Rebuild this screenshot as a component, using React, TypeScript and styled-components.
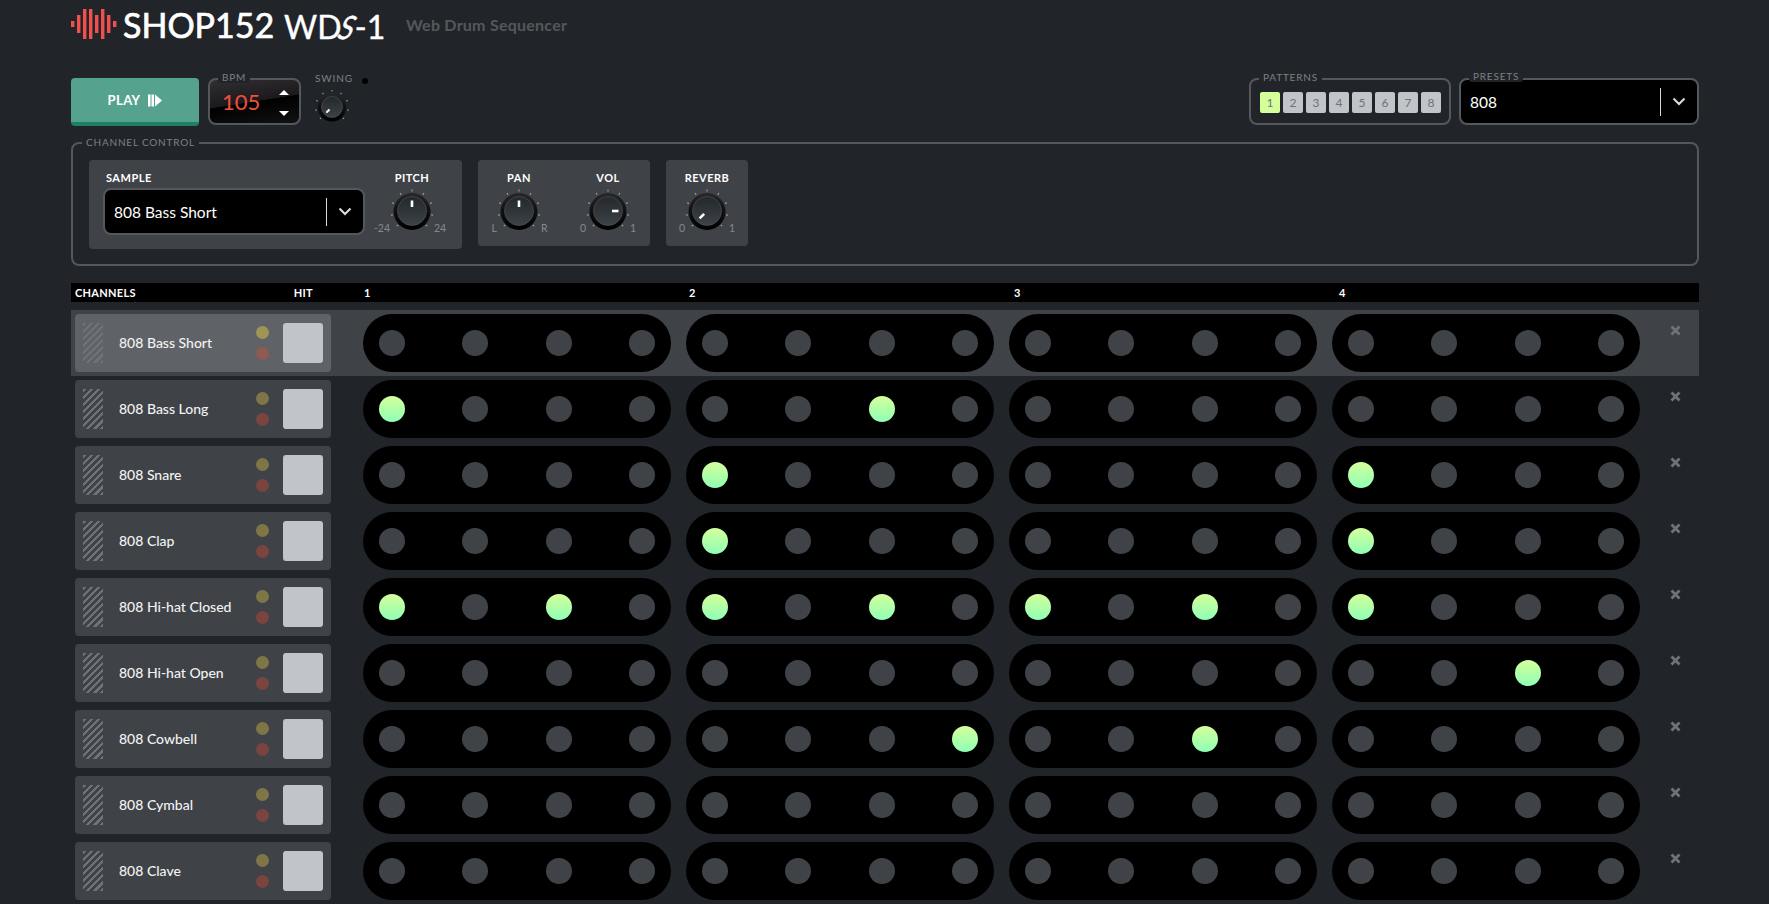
import React from 'react';
import styled, { createGlobalStyle } from 'styled-components';

const font = `'Lato', 'Noto Sans', sans-serif`;

const Global = createGlobalStyle`
  html, body { margin: 0; padding: 0; background: #212529; height: 904px; overflow: hidden; }
  body { font-family: ${font}; color: #fff; }
  * { box-sizing: border-box; }
`;

const Page = styled.div`
  width: 1769px;
  height: 904px;
  overflow: hidden;
  padding: 0 70px 0 71px;
  background: #212529;
`;

const Header = styled.header`
  height: 50px;
  padding-top: 7px;
  display: flex;
  align-items: flex-start;
`;
const LogoWord = styled.span`
  margin-left: 6px;
  font-size: 34px;
  line-height: 36px;
  font-weight: 400;
  -webkit-text-stroke: 0.7px #fff;
  color: #fff;
  width: 161px;
`;
const ModelWord = styled.span`
  font-size: 32px;
  line-height: 36px;
  width: 122px;
  color: #fff;
  padding-top: 2px;
  -webkit-text-stroke: 0.4px #fff;
`;
const SlantS = styled.span`
  display: inline-block;
  margin: 0 -2px;
  transform: skewX(-22deg) scaleX(0.85);
`;
const Tagline = styled.span`
  font-size: 16px;
  font-weight: 700;
  line-height: 36px;
  letter-spacing: 0.25px;
  color: #54585d;
`;

const TopBar = styled.div`
  margin-top: 28px;
  height: 47px;
  display: flex;
  align-items: flex-start;
`;
const PlayButton = styled.button`
  width: 128px;
  height: 48px;
  margin-right: 9px;
  border: 0;
  border-bottom: 4px solid #1d8069;
  border-radius: 4px;
  background: #55a38f;
  color: #fff;
  font-family: ${font};
  font-size: 13px;
  font-weight: 700;
  letter-spacing: 0.4px;
  display: flex;
  align-items: center;
  justify-content: center;
  gap: 8px;
  padding: 0;
`;
const Legend = styled.span<{ $left: number; $top?: number }>`
  position: absolute;
  left: ${p => p.$left}px;
  top: ${p => p.$top ?? -9}px;
  padding: 0 4px;
  background: #212529;
  font-size: 10px;
  line-height: 12px;
  letter-spacing: 0.8px;
  color: #7d8186;
  border-radius: 3px;
`;
const BpmBox = styled.div`
  position: relative;
  width: 93px;
  height: 47px;
  border: 2px solid #54585d;
  border-radius: 8px;
  background: linear-gradient(171deg, #322f33 0%, #1b191c 49.5%, #000 50.5%, #121214 100%);
  display: flex;
  align-items: center;
  justify-content: space-between;
  padding: 0 10px 0 12px;
`;
const BpmValue = styled.span`
  font-size: 22px;
  color: #f0503a;
`;
const Arrows = styled.div`
  display: flex;
  flex-direction: column;
  gap: 16px;
  padding-top: 3px;
`;
const Arrow = styled.span<{ $up?: boolean }>`
  width: 0;
  height: 0;
  border-left: 5px solid transparent;
  border-right: 5px solid transparent;
  ${p => (p.$up ? 'border-bottom: 5px solid #fff;' : 'border-top: 5px solid #fff;')}
`;
const SwingBlock = styled.div`
  margin-left: 14px;
  display: flex;
  flex-direction: column;
  align-items: flex-start;
  width: 60px;
  margin-top: -6px;
`;
const SwingHead = styled.div`
  display: flex;
  align-items: center;
  gap: 9px;
  font-size: 10px;
  line-height: 12px;
  letter-spacing: 0.9px;
  color: #7d8186;
`;
const Led = styled.span`
  width: 6px;
  height: 6px;
  border-radius: 50%;
  background: #000;
  margin-top: 5px;
`;
const SwingKnobWrap = styled.div`
  margin: 3px 0 0 -3px;
`;
const Spacer = styled.div`
  flex: 1;
`;
const PatternBox = styled.div`
  position: relative;
  width: 202px;
  height: 47px;
  border: 2px solid #54585d;
  border-radius: 8px;
  padding: 12px 0 0 9px;
  display: flex;
  gap: 3px;
  margin-right: 8px;
`;
const PatternButton = styled.span<{ $active?: boolean }>`
  width: 20px;
  height: 21px;
  border-radius: 2px;
  background: ${p => (p.$active ? '#d5ff9b' : '#c1c4c8')};
  color: #6f7378;
  font-size: 12px;
  display: flex;
  align-items: center;
  justify-content: center;
`;
const SelectBox = styled.div<{ $w: number; $h: number }>`
  position: relative;
  width: ${p => p.$w}px;
  height: ${p => p.$h}px;
  border: 2px solid #54585d;
  border-radius: 8px;
  background: #000;
  display: flex;
  align-items: center;
  padding-left: 9px;
  font-size: 15.5px;
  color: #fff;
`;
const SelectText = styled.span`
  flex: 1;
`;
const SelectDivider = styled.span`
  width: 1px;
  height: 28px;
  background: #d8d8d8;
`;
const Chevron = styled.span`
  width: 36px;
  display: flex;
  justify-content: center;
  color: #ddd;
`;
const ControlField = styled.section`
  position: relative;
  margin-top: 17px;
  height: 124px;
  border: 2px solid #54585d;
  border-radius: 8px;
  padding: 16px 16px;
  display: flex;
  align-items: flex-start;
  gap: 16px;
`;
const Panel = styled.div<{ $w: number; $h: number }>`
  width: ${p => p.$w}px;
  height: ${p => p.$h}px;
  border-radius: 4px;
  background: #3f4348;
  display: flex;
`;
const SampleCol = styled.div`
  margin-left: 14px;
  margin-top: 11px;
  display: flex;
  flex-direction: column;
  gap: 4px;
`;
const PanelLabel = styled.span`
  font-size: 11px;
  line-height: 13px;
  font-weight: 700;
  letter-spacing: 0.5px;
  color: #fff;
  padding-left: 3px;
`;
const KnobCol = styled.div<{ $x: number }>`
  margin-left: ${p => p.$x}px;
  width: 80px;
  padding-top: 11px;
  display: flex;
  flex-direction: column;
  align-items: center;
`;
const KnobLabel = styled.span`
  font-size: 11px;
  line-height: 13px;
  font-weight: 700;
  letter-spacing: 0.5px;
  color: #fff;
`;
const KnobRow = styled.div`
  display: grid;
  grid-template-columns: 18px 44px 18px;
  align-items: end;
  margin-top: 2px;
`;
const KnobSlot = styled.div`
  margin: 0 -3px;
`;
const Range = styled.span<{ $right?: boolean }>`
  font-size: 10.5px;
  line-height: 12px;
  color: #85898e;
  white-space: nowrap;
  padding-bottom: 2px;
  text-align: ${p => (p.$right ? 'left' : 'right')};
`;

const Grid = styled.div`
  margin-top: 17px;
`;
const HeadRow = styled.div`
  height: 19px;
  background: #000;
  display: grid;
  grid-template-columns: 293px repeat(4, 325px) 1fr;
  align-items: center;
  font-size: 11px;
  font-weight: 700;
  letter-spacing: 0.3px;
  color: #fff;
  margin-bottom: 8px;
`;
const HeadFirst = styled.div`
  display: flex;
  justify-content: space-between;
  padding: 0 51px 0 4px;
`;
const Row = styled.div<{ $selected?: boolean }>`
  height: 66px;
  padding: 4px 0 4px 4px;
  background: ${p => (p.$selected ? '#3f4348' : 'transparent')};
  display: flex;
  align-items: stretch;
`;
const ChannelCard = styled.div<{ $selected?: boolean }>`
  width: 256px;
  border-radius: 4px;
  background: ${p => (p.$selected ? '#5f6368' : '#3f4348')};
  display: flex;
  align-items: center;
  padding: 0 8px;
  margin-right: 32px;
`;
const Grip = styled.span`
  width: 20px;
  height: 40px;
  background: repeating-linear-gradient(135deg, #6f7378 0 2.5px, transparent 2.5px 5px);
  margin-right: 16px;
`;
const ChannelName = styled.span`
  flex: 1;
  font-size: 14px;
  font-weight: 500;
  color: #f2f2f2;
  padding-bottom: 2px;
`;
const DotPair = styled.div`
  display: flex;
  flex-direction: column;
  gap: 8px;
  margin-right: 14px;
`;
const StatusDot = styled.span<{ $color: string }>`
  width: 13px;
  height: 13px;
  border-radius: 50%;
  background: ${p => p.$color};
`;
const HitPad = styled.span`
  width: 40px;
  height: 40px;
  border-radius: 3px;
  background: #c1c4c8;
`;
const Pill = styled.div`
  width: 308px;
  margin-right: 15px;
  border-radius: 29px;
  background: #000;
  padding: 0 16px;
  display: flex;
  align-items: center;
  justify-content: space-between;
`;
const Step = styled.span<{ $on?: boolean }>`
  width: 26px;
  height: 26px;
  border-radius: 50%;
  background: ${p => (p.$on ? 'linear-gradient(180deg, #d5ff9b 0%, #8effb5 100%)' : '#3f4348')};
`;
const RemoveCell = styled.div`
  padding: 11px 0 0 15px;
  color: #6f7378;
  display: flex;
  align-items: flex-start;
`;

const Knob: React.FC<{ angle: number; size?: 'sm' | 'md' }> = ({ angle, size = 'md' }) => {
  const small = size === 'sm';
  const dim = small ? 40 : 50;
  const c = dim / 2;
  const disc = small ? 14 : 18.5;
  const cap = small ? 10.5 : 14.5;
  const tickIn = small ? 15.5 : 19.5;
  const tickOut = small ? 17 : 21.5;
  const ptrA = small ? 3.5 : 4;
  const ptrB = small ? 8 : 10.5;
  const id = `knob-${size}-${angle}`;
  const ticks = Array.from({ length: 9 }, (_, i) => -135 + i * 33.75);
  return (
    <svg width={dim} height={dim} viewBox={`0 0 ${dim} ${dim}`} style={{ display: 'block' }}>
      <defs>
        <linearGradient id={id} x1="0" y1="0" x2="0" y2="1">
          <stop offset="0" stopColor="#23282c" />
          <stop offset="1" stopColor="#3c4247" />
        </linearGradient>
        <linearGradient id={`${id}-d`} x1="0" y1="0" x2="0" y2="1">
          <stop offset="0" stopColor="#2a272b" />
          <stop offset="0.45" stopColor="#121114" />
          <stop offset="1" stopColor="#000" />
        </linearGradient>
      </defs>
      {ticks.map(t => (
        <line
          key={t}
          x1={c}
          y1={c - tickIn}
          x2={c}
          y2={c - tickOut}
          stroke="#a5a8ac"
          strokeWidth="1"
          transform={`rotate(${t} ${c} ${c})`}
        />
      ))}
      <circle cx={c} cy={c + 0.5} r={disc} fill={`url(#${id}-d)`} />
      <circle cx={c} cy={c} r={cap} fill={`url(#${id})`} stroke="#5d6165" strokeWidth="0.5" />
      <line
        x1={c}
        y1={c - ptrA}
        x2={c}
        y2={c - ptrB}
        stroke="#fff"
        strokeWidth={small ? 2 : 2.6}
        transform={`rotate(${angle} ${c} ${c})`}
      />
    </svg>
  );
};

const ChevronIcon = () => (
  <svg width="14" height="9" viewBox="0 0 14 9">
    <path d="M1.5 1.5 L7 7 L12.5 1.5" fill="none" stroke="currentColor" strokeWidth="2" />
  </svg>
);

const LogoWave = () => (
  <svg width="46" height="30" viewBox="0 0 46 30" style={{ display: 'block', marginTop: 2 }}>
    {[6, 18, 30, 30, 18, 30, 18, 6].map((h, i) => (
      <rect key={i} x={i * 6} y={15 - h / 2} width="3.4" height={h} fill="#f2504f" />
    ))}
  </svg>
);

const CloseIcon = () => (
  <svg width="11" height="11" viewBox="0 0 11 11">
    <path d="M1.5 1.5 L9.5 9.5 M9.5 1.5 L1.5 9.5" stroke="currentColor" strokeWidth="2.8" />
  </svg>
);

const PlayIcon = () => (
  <svg width="14" height="13" viewBox="0 0 14 13">
    <rect x="0" y="0.5" width="2.5" height="12" fill="#fff" />
    <rect x="3.5" y="0.5" width="2.5" height="12" fill="#fff" />
    <path d="M7 0.5 L14 6.5 L7 12.5 Z" fill="#fff" />
  </svg>
);

const channels: { name: string; on: number[] }[] = [
  { name: '808 Bass Short', on: [] },
  { name: '808 Bass Long', on: [0, 6] },
  { name: '808 Snare', on: [4, 12] },
  { name: '808 Clap', on: [4, 12] },
  { name: '808 Hi-hat Closed', on: [0, 2, 4, 6, 8, 10, 12] },
  { name: '808 Hi-hat Open', on: [14] },
  { name: '808 Cowbell', on: [7, 10] },
  { name: '808 Cymbal', on: [] },
  { name: '808 Clave', on: [] },
];

const Select: React.FC<{ w: number; h: number; value: string; children?: React.ReactNode }> = ({ w, h, value, children }) => (
  <SelectBox $w={w} $h={h}>
    {children}
    <SelectText>{value}</SelectText>
    <SelectDivider />
    <Chevron>
      <ChevronIcon />
    </Chevron>
  </SelectBox>
);

const RangedKnob: React.FC<{ label: string; min: string; max: string; angle: number; x: number }> = ({ label, min, max, angle, x }) => (
  <KnobCol $x={x}>
    <KnobLabel>{label}</KnobLabel>
    <KnobRow>
      <Range>{min}</Range>
      <KnobSlot>
        <Knob angle={angle} />
      </KnobSlot>
      <Range $right>{max}</Range>
    </KnobRow>
  </KnobCol>
);

export default function App() {
  return (
    <Page>
      <Global />
      <Header>
        <LogoWave />
        <LogoWord>SHOP152</LogoWord>
        <ModelWord>
          WD<SlantS>S</SlantS>-1
        </ModelWord>
        <Tagline>Web Drum Sequencer</Tagline>
      </Header>
      <TopBar>
        <PlayButton>
          PLAY <PlayIcon />
        </PlayButton>
        <BpmBox>
          <Legend $left={8}>BPM</Legend>
          <BpmValue>105</BpmValue>
          <Arrows>
            <Arrow $up />
            <Arrow />
          </Arrows>
        </BpmBox>
        <SwingBlock>
          <SwingHead>
            SWING <Led />
          </SwingHead>
          <SwingKnobWrap>
            <Knob angle={-135} size="sm" />
          </SwingKnobWrap>
        </SwingBlock>
        <Spacer />
        <PatternBox>
          <Legend $left={8}>PATTERNS</Legend>
          {[1, 2, 3, 4, 5, 6, 7, 8].map(n => (
            <PatternButton key={n} $active={n === 1}>
              {n}
            </PatternButton>
          ))}
        </PatternBox>
        <Select w={240} h={47} value="808">
          <Legend $left={8} $top={-10}>PRESETS</Legend>
        </Select>
      </TopBar>
      <ControlField>
        <Legend $left={9} $top={-8}>CHANNEL CONTROL</Legend>
        <Panel $w={373} $h={89}>
          <SampleCol>
            <PanelLabel>SAMPLE</PanelLabel>
            <Select w={262} h={47} value="808 Bass Short" />
          </SampleCol>
          <RangedKnob label="PITCH" min="-24" max="24" angle={0} x={7} />
        </Panel>
        <Panel $w={172} $h={86}>
          <RangedKnob label="PAN" min="L" max="R" angle={0} x={1} />
          <RangedKnob label="VOL" min="0" max="1" angle={90} x={9} />
        </Panel>
        <Panel $w={82} $h={86}>
          <RangedKnob label="REVERB" min="0" max="1" angle={-135} x={1} />
        </Panel>
      </ControlField>
      <Grid>
        <HeadRow>
          <HeadFirst>
            <span>CHANNELS</span>
            <span>HIT</span>
          </HeadFirst>
          <span>1</span>
          <span>2</span>
          <span>3</span>
          <span>4</span>
        </HeadRow>
        {channels.map((c, i) => (
          <Row key={c.name} $selected={i === 0}>
            <ChannelCard $selected={i === 0}>
              <Grip />
              <ChannelName>{c.name}</ChannelName>
              <DotPair>
                <StatusDot $color={i === 0 ? '#a09556' : '#7f7648'} />
                <StatusDot $color={i === 0 ? '#8f5a50' : '#7c443f'} />
              </DotPair>
              <HitPad />
            </ChannelCard>
            {[0, 1, 2, 3].map(p => (
              <Pill key={p}>
                {[0, 1, 2, 3].map(s => (
                  <Step key={s} $on={c.on.includes(p * 4 + s)} />
                ))}
              </Pill>
            ))}
            <RemoveCell>
              <CloseIcon />
            </RemoveCell>
          </Row>
        ))}
      </Grid>
    </Page>
  );
}
